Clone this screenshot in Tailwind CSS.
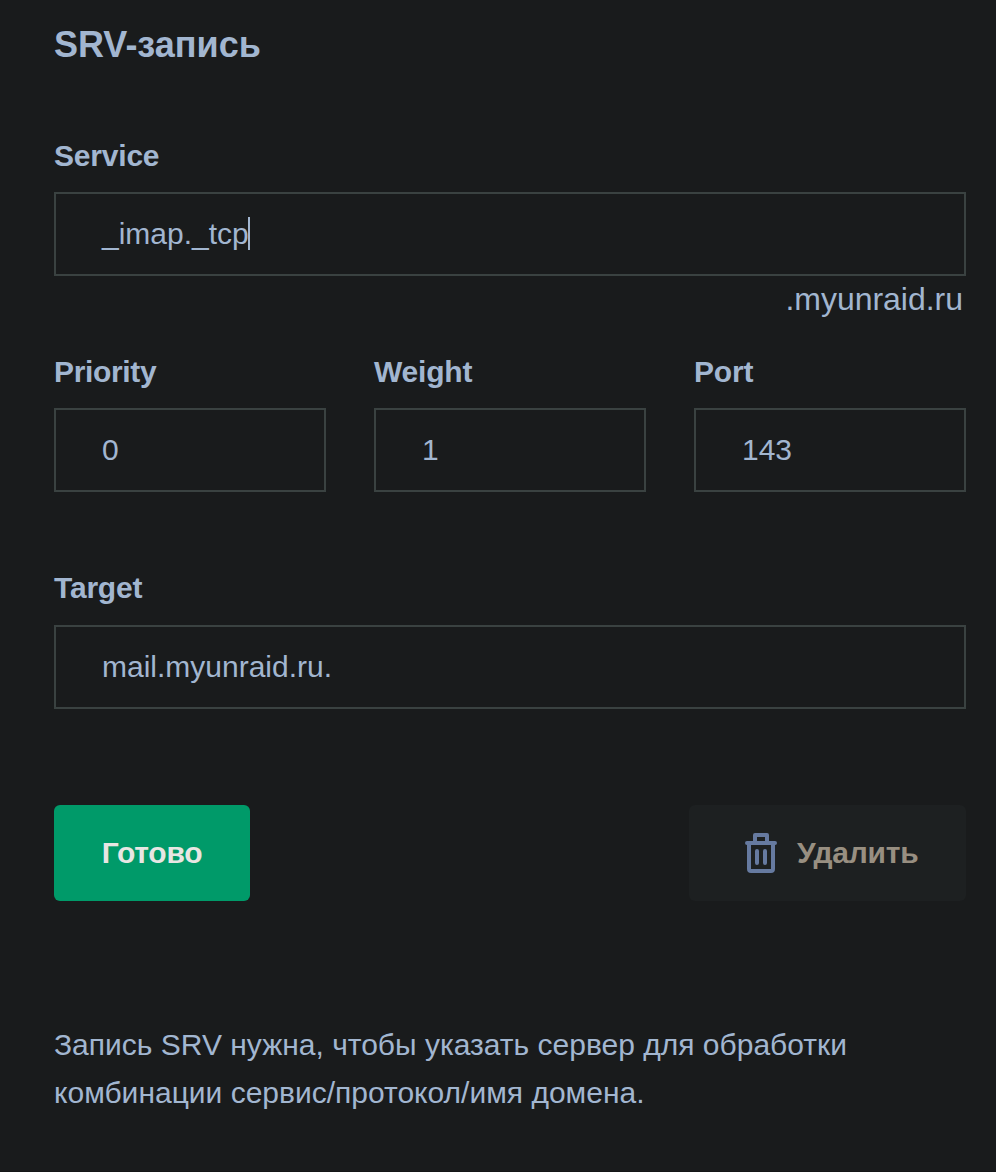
<!DOCTYPE html>
<html lang="ru">
<head>
<meta charset="utf-8">
<title>SRV-запись</title>
<script src="https://cdn.jsdelivr.net/npm/@tailwindcss/browser@4"></script>
</head>
<body class="bg-[#191b1c] text-[#a2b6d0] font-['Liberation_Sans',Arial,sans-serif] text-[30px] leading-[48px]">
<main class="w-[996px] h-[1172px] pl-[54px] pr-[30px] pt-[21px] overflow-hidden border-b border-[#141617]">
  <h1 class="text-[36px] leading-[48px] font-bold">SRV-запись</h1>
  <form>
    <label class="block mt-[63px] font-bold tracking-[-0.2px]">Service</label>
    <div class="mt-3 h-[84px] border-2 border-[#3a4241] px-[46px] flex items-center"><span>_imap._tcp</span><span class="-ml-px mb-px w-[2px] h-[33px] bg-[#a2b6d0]"></span></div>
    <div class="text-right text-[32px] leading-[46px] tracking-[-0.02px] pr-[3px] h-12">.myunraid.ru</div>
    <div class="grid grid-cols-3 gap-12 mt-6">
      <div><label class="block font-bold tracking-[-0.35px]">Priority</label><div class="mt-3 h-[84px] border-2 border-[#3a4241] px-[46px] flex items-center">0</div></div>
      <div><label class="block font-bold tracking-[-0.2px]">Weight</label><div class="mt-3 h-[84px] border-2 border-[#3a4241] px-[46px] flex items-center">1</div></div>
      <div><label class="block font-bold tracking-[-0.2px]">Port</label><div class="mt-3 h-[84px] border-2 border-[#3a4241] px-[46px] flex items-center">143</div></div>
    </div>
    <label class="block mt-[72px] mb-[13px] font-bold tracking-[-0.2px]">Target</label>
    <div class="h-[84px] border-2 border-[#3a4241] px-[46px] flex items-center">mail.myunraid.ru.</div>
    <div class="mt-24 flex justify-between">
      <button type="button" class="w-[196px] h-24 rounded-md bg-[#009a69] text-[#e8e6e3] font-bold tracking-[-0.25px]">Готово</button>
      <button type="button" class="w-[277px] h-24 rounded-md bg-[#1d2021] text-[#988f81] font-bold tracking-[-0.25px] flex items-center pl-14">
        <svg class="w-8 h-10 mr-5" viewBox="0 0 32 40" fill="none" stroke="#667aa0" stroke-width="4" stroke-linecap="round" stroke-linejoin="round"><path d="M2 10H30M10 10V2H22V10M4 10V36Q4 38 6 38H26Q28 38 28 36V10M12 18V30M20 18V30"/></svg>Удалить
      </button>
    </div>
  </form>
  <p class="mt-[120px]">Запись SRV нужна, чтобы указать сервер для обработки<br>комбинации сервис/протокол/имя домена.</p>
</main>
</body>
</html>
